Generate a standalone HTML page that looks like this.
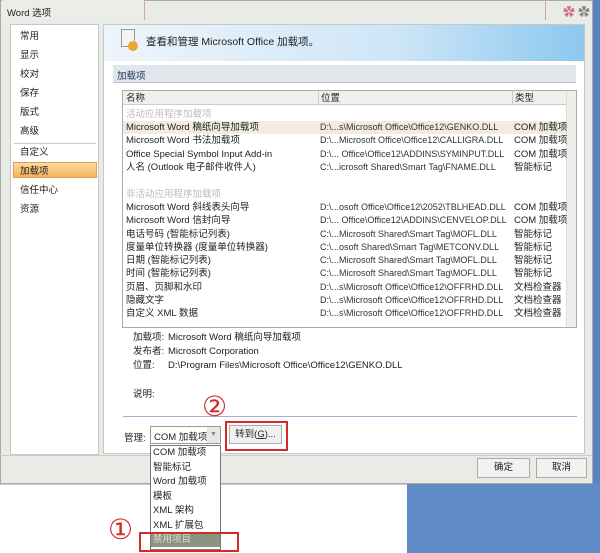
<!DOCTYPE html>
<html><head><meta charset="utf-8"><style>
*{margin:0;padding:0;box-sizing:border-box}
body{width:600px;height:553px;overflow:hidden;background:#fff;position:relative;font-family:"Liberation Sans","Noto Sans CJK SC",sans-serif;font-size:9.5px;color:#222}
.a{position:absolute;white-space:nowrap}
.r{position:absolute;height:13px;line-height:13px;white-space:nowrap}
</style></head><body>
<div class="a" style="left:0;top:0;width:593px;height:484px;background:#e9ebe6;border:1px solid #a8aaa6"></div>
<div class="a" style="left:593px;top:0;width:7px;height:553px;background:#5a84bd"></div>
<div class="a" style="left:407px;top:484px;width:193px;height:69px;background:#5f8cc6"></div>
<div class="a" style="left:0;top:484px;width:407px;height:69px;background:#fff;border-top:1px solid #ccc"></div>
<div class="a" style="left:2px;top:0;width:143px;height:20px;background:#ecece8;border-right:1px solid #c9aaa0"></div>
<div class="a" style="left:7px;top:5px;font-size:9.5px">Word 选项</div>
<div class="a" style="left:545px;top:0;width:1px;height:20px;background:#c9aaa0"></div>
<div class="a" style="left:563px;top:3px;color:#d46a8a;font-size:12px">✿</div><div class="a" style="left:578px;top:3px;color:#888;font-size:12px">✿</div>
<!-- left nav -->
<div class="a" style="left:10px;top:24px;width:89px;height:431px;background:#fff;border:1px solid #c6c8c4"></div>
<div class="a" style="left:20px;top:27px;line-height:19px">常用<br>显示<br>校对<br>保存<br>版式<br>高级</div>
<div class="a" style="left:14px;top:143px;width:82px;height:1px;background:#ccc"></div>
<div class="a" style="left:13px;top:162px;width:84px;height:16px;background:linear-gradient(#fbd9a0,#f6b55a);border:1px solid #e0a050"></div>
<div class="a" style="left:20px;top:143px;line-height:19px">自定义<br>加载项<br>信任中心<br>资源</div>
<!-- content -->
<div class="a" style="left:103px;top:24px;width:482px;height:430px;background:#fff;border:1px solid #c6c8c4"></div>
<div class="a" style="left:104px;top:25px;width:480px;height:36px;background:linear-gradient(90deg,#eef5fb,#cfe6f7 60%,#8cc8ef)"></div>
<div class="a" style="left:121px;top:29px;width:14px;height:18px;background:#f4f4f4;border:1px solid #999"></div>
<div class="a" style="left:128px;top:41px;width:10px;height:10px;border-radius:50%;background:#e9a834"></div>
<div class="a" style="left:146px;top:34px;font-size:10.5px">查看和管理 Microsoft Office 加载项。</div>
<div class="a" style="left:113px;top:65px;width:463px;height:18px;background:#e1e6ed;border-bottom:1px solid #b5c4d8"></div>
<div class="a" style="left:117px;top:68px;color:#1f3560">加载项</div>
<div class="a" style="left:122px;top:90px;width:455px;height:238px;border:1px solid #aaa;background:#fff"></div>
<div class="a" style="left:123px;top:91px;width:443px;height:14px;background:#f0f0ec;border-bottom:1px solid #ccc"></div>
<div class="a" style="left:318px;top:91px;width:1px;height:14px;background:#ccc"></div>
<div class="a" style="left:512px;top:91px;width:1px;height:14px;background:#ccc"></div>
<div class="a" style="left:566px;top:91px;width:10px;height:236px;background:#eeeeea;border-left:1px solid #ddd"></div>
<div class="r" style="left:126px;top:92px">名称</div><div class="r" style="left:321px;top:92px">位置</div><div class="r" style="left:515px;top:92px">类型</div>
<div class="a" style="left:123px;top:121px;width:443px;height:13px;background:#f1ebe0"></div>
<div class="r" style="left:126px;top:108px;color:#bbb">活动应用程序加载项</div>
<div class="a" style="left:126px;top:121px;line-height:13.3px">Microsoft Word 稿纸向导加载项<br>Microsoft Word 书法加载项<br>Office Special Symbol Input Add-in<br>人名 (Outlook 电子邮件收件人)</div>
<div class="a" style="left:320px;top:121px;line-height:13.3px;color:#333;font-size:9px">D:\...s\Microsoft Office\Office12\GENKO.DLL<br>D:\...Microsoft Office\Office12\CALLIGRA.DLL<br>D:\... Office\Office12\ADDINS\SYMINPUT.DLL<br>C:\...icrosoft Shared\Smart Tag\FNAME.DLL</div>
<div class="a" style="left:514px;top:121px;line-height:13.3px">COM 加载项<br>COM 加载项<br>COM 加载项<br>智能标记</div>
<div class="r" style="left:126px;top:188px;color:#bbb">非活动应用程序加载项</div>
<div class="a" style="left:126px;top:201px;line-height:13.3px">Microsoft Word 斜线表头向导<br>Microsoft Word 信封向导<br>电话号码 (智能标记列表)<br>度量单位转换器 (度量单位转换器)<br>日期 (智能标记列表)<br>时间 (智能标记列表)<br>页眉、页脚和水印<br>隐藏文字<br>自定义 XML 数据</div>
<div class="a" style="left:320px;top:201px;line-height:13.3px;color:#333;font-size:9px">D:\...osoft Office\Office12\2052\TBLHEAD.DLL<br>D:\... Office\Office12\ADDINS\CENVELOP.DLL<br>C:\...Microsoft Shared\Smart Tag\MOFL.DLL<br>C:\...osoft Shared\Smart Tag\METCONV.DLL<br>C:\...Microsoft Shared\Smart Tag\MOFL.DLL<br>C:\...Microsoft Shared\Smart Tag\MOFL.DLL<br>D:\...s\Microsoft Office\Office12\OFFRHD.DLL<br>D:\...s\Microsoft Office\Office12\OFFRHD.DLL<br>D:\...s\Microsoft Office\Office12\OFFRHD.DLL</div>
<div class="a" style="left:514px;top:201px;line-height:13.3px">COM 加载项<br>COM 加载项<br>智能标记<br>智能标记<br>智能标记<br>智能标记<br>文档检查器<br>文档检查器<br>文档检查器</div>
<div class="a" style="left:133px;top:331px;line-height:14px">加载项:<br>发布者:<br>位置:</div>
<div class="a" style="left:168px;top:331px;line-height:14px">Microsoft Word 稿纸向导加载项<br>Microsoft Corporation<br>D:\Program Files\Microsoft Office\Office12\GENKO.DLL</div>
<div class="a" style="left:133px;top:386px">说明:</div>
<div class="a" style="left:123px;top:416px;width:454px;height:1px;background:#9fb3cf"></div>
<div class="a" style="left:124px;top:430px">管理:</div>
<div class="a" style="left:150px;top:426px;width:71px;height:18px;background:#fff;border:1px solid #999"></div>
<div class="a" style="left:154px;top:429px">COM 加载项</div>
<div class="a" style="left:207px;top:427px;width:13px;height:16px;background:#e6e6e4;color:#888;font-size:7px;text-align:center;line-height:16px">▼</div>
<div class="a" style="left:229px;top:425px;width:53px;height:19px;background:#f1f1ef;border:1px solid #aaa;text-align:center;line-height:17px">转到(<u>G</u>)...</div>
<div class="a" style="left:225px;top:421px;width:63px;height:30px;border:2px solid #d12b2b"></div>
<div class="a" style="left:202px;top:390px;color:#d12b2b;font-size:28px;font-family:'Liberation Serif',serif">②</div>
<div class="a" style="left:0;top:455px;width:592px;height:1px;background:#ccc"></div>
<div class="a" style="left:477px;top:458px;width:53px;height:20px;background:#f2f2f0;border:1px solid #aaa;text-align:center;line-height:18px">确定</div>
<div class="a" style="left:536px;top:458px;width:51px;height:20px;background:#f2f2f0;border:1px solid #aaa;text-align:center;line-height:18px">取消</div>
<!-- dropdown -->
<div class="a" style="left:150px;top:445px;width:71px;height:105px;background:#fff;border:1px solid #777"></div>
<div class="a" style="left:151px;top:533px;width:69px;height:14px;background:#8a9580"></div>
<div class="a" style="left:153px;top:446px;line-height:14.5px">COM 加载项<br>智能标记<br>Word 加载项<br>模板<br>XML 架构<br>XML 扩展包<br><span style="color:#ddd">禁用项目</span></div>
<div class="a" style="left:139px;top:532px;width:100px;height:20px;border:2px solid #d12b2b"></div>
<div class="a" style="left:108px;top:513px;color:#d12b2b;font-size:28px;font-family:'Liberation Serif',serif">①</div>
</body></html>
